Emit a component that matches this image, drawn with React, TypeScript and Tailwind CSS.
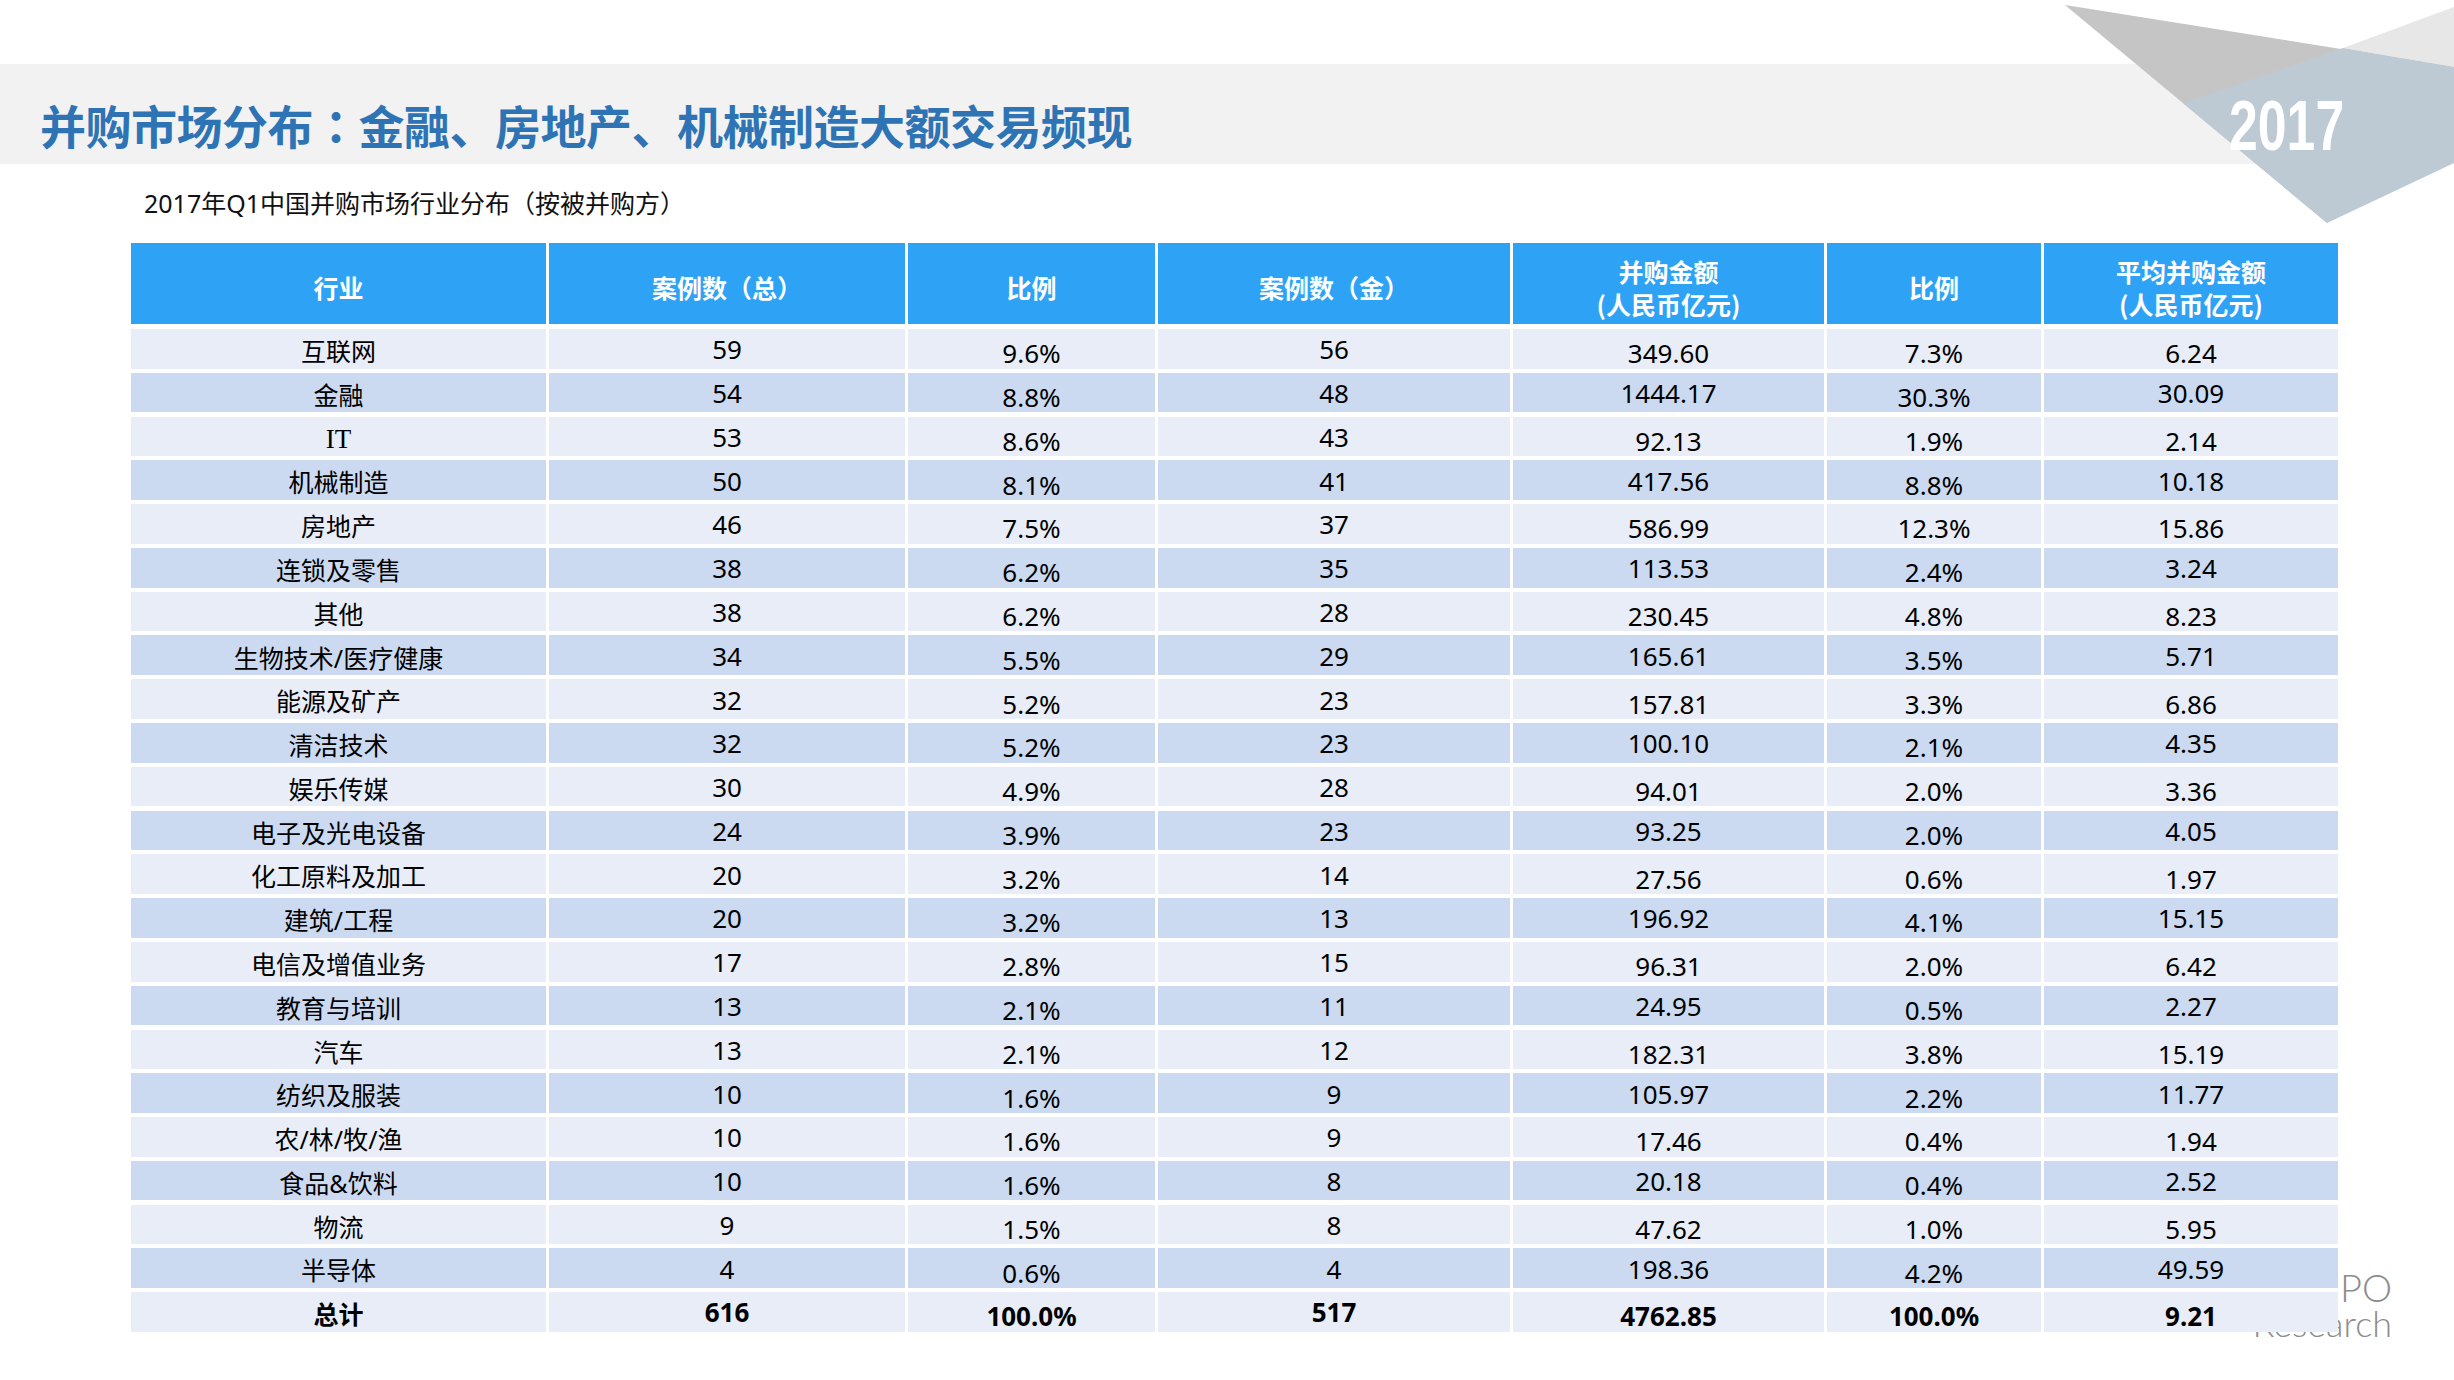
import React from "react";

const rows: string[][] = [
  ["互联网", "59", "9.6%", "56", "349.60", "7.3%", "6.24"],
  ["金融", "54", "8.8%", "48", "1444.17", "30.3%", "30.09"],
  ["IT", "53", "8.6%", "43", "92.13", "1.9%", "2.14"],
  ["机械制造", "50", "8.1%", "41", "417.56", "8.8%", "10.18"],
  ["房地产", "46", "7.5%", "37", "586.99", "12.3%", "15.86"],
  ["连锁及零售", "38", "6.2%", "35", "113.53", "2.4%", "3.24"],
  ["其他", "38", "6.2%", "28", "230.45", "4.8%", "8.23"],
  ["生物技术/医疗健康", "34", "5.5%", "29", "165.61", "3.5%", "5.71"],
  ["能源及矿产", "32", "5.2%", "23", "157.81", "3.3%", "6.86"],
  ["清洁技术", "32", "5.2%", "23", "100.10", "2.1%", "4.35"],
  ["娱乐传媒", "30", "4.9%", "28", "94.01", "2.0%", "3.36"],
  ["电子及光电设备", "24", "3.9%", "23", "93.25", "2.0%", "4.05"],
  ["化工原料及加工", "20", "3.2%", "14", "27.56", "0.6%", "1.97"],
  ["建筑/工程", "20", "3.2%", "13", "196.92", "4.1%", "15.15"],
  ["电信及增值业务", "17", "2.8%", "15", "96.31", "2.0%", "6.42"],
  ["教育与培训", "13", "2.1%", "11", "24.95", "0.5%", "2.27"],
  ["汽车", "13", "2.1%", "12", "182.31", "3.8%", "15.19"],
  ["纺织及服装", "10", "1.6%", "9", "105.97", "2.2%", "11.77"],
  ["农/林/牧/渔", "10", "1.6%", "9", "17.46", "0.4%", "1.94"],
  ["食品&饮料", "10", "1.6%", "8", "20.18", "0.4%", "2.52"],
  ["物流", "9", "1.5%", "8", "47.62", "1.0%", "5.95"],
  ["半导体", "4", "0.6%", "4", "198.36", "4.2%", "49.59"],
  ["总计", "616", "100.0%", "517", "4762.85", "100.0%", "9.21"],
];

const headers: string[][] = [
  ["行业"],
  ["案例数（总）"],
  ["比例"],
  ["案例数（金）"],
  ["并购金额", "(人民币亿元)"],
  ["比例"],
  ["平均并购金额", "(人民币亿元)"],
];

const cols = "grid-cols-[415px_356px_247px_352px_311px_214px_294px]";

function Decoration() {
  return (
    <svg
      className="absolute left-[2060px] top-0 w-[394px] h-[240px]"
      viewBox="2060 0 394 240"
    >
      <polygon points="2065,5 2454,67 2327,223" fill="#c5c5c6" />
      <polygon points="2343,48 2454,7 2454,67" fill="#e7e7e8" />
      <polygon points="2183,103 2343,48 2454,67 2454,163 2327,223" fill="#bdc9d3" />
    </svg>
  );
}

function cellShift(r: number, c: number) {
  if (c === 0) return "translate-y-[3px]";
  const low = c === 2 || c === 5 || ((c === 4 || c === 6) && r % 2 === 0);
  return low ? "translate-y-[5px]" : "translate-y-[1px]";
}

export default function App() {
  return (
    <div className="relative w-[2454px] h-[1380px] overflow-hidden bg-white font-['Noto_Sans','Noto_Sans_CJK_SC',sans-serif]">
      {/* logo, mostly hidden behind the table */}
      <div className="absolute right-[62px] top-[1269px] text-right text-[#8c8c8c] font-['Lato','Open_Sans',sans-serif] font-light">
        <div className="text-[38px] leading-[36px]">IPO</div>
        <div className="mt-[2px] text-[36px] leading-[32px]">Research</div>
      </div>

      <div className="pt-[64px]">
        <div className="h-[100px] bg-[#f2f2f2] pl-[40px] pt-[37px]">
          <h1 className="text-[46px] leading-[46px] font-bold text-[#2e74b5] font-['Noto_Sans_CJK_SC',sans-serif] tracking-[-0.5px]">
            并购市场分布<span className="font-['Noto_Sans_CJK_TC',sans-serif]">：</span>金融、房地产、机械制造大额交易频现
          </h1>
        </div>
      </div>

      <Decoration />
      <div className="absolute left-[2229px] top-[91px] text-[70px] leading-none font-bold text-white font-['Liberation_Sans',sans-serif] origin-left scale-x-[0.74]">
        2017
      </div>

      <p className="mt-[27px] pl-[144px] text-[25px] leading-[25px] text-[#111] font-['Noto_Sans','Noto_Sans_CJK_SC',sans-serif]">
        2017年Q1中国并购市场行业分布（按被并购方）
      </p>

      <div className="relative z-10 mt-[27px] ml-[131px] w-[2207px] bg-white">
        <div className={`grid ${cols} gap-x-[3px] h-[81px]`}>
          {headers.map((h, i) => (
            <div
              key={i}
              className="bg-[#2ea3f5] flex flex-col items-center justify-center pt-[8px] text-white font-bold text-[25px] leading-[33px] font-['Noto_Sans_CJK_SC',sans-serif]"
            >
              {h.map((line) => (
                <span key={line}>{line}</span>
              ))}
            </div>
          ))}
        </div>

        <div className={`grid ${cols} gap-x-[3px] gap-y-[4.2px] auto-rows-[39.6px] mt-[5px]`}>
          {rows.map((row, r) =>
            row.map((cell, c) => (
              <div
                key={`${r}-${c}`}
                className={`flex items-center justify-center text-black ${
                  c === 0 ? "text-[25px]" : "text-[26px]"
                } ${r % 2 === 0 ? "bg-[#e8edf7]" : "bg-[#cbdaf0]"} ${
                  r === rows.length - 1 ? "font-bold" : ""
                }`}
              >
                <span
                  className={`${cellShift(r, c)} ${
                    cell === "IT" ? "font-['Liberation_Serif',serif] text-[27px]" : ""
                  }`}
                >
                  {cell}
                </span>
              </div>
            ))
          )}
        </div>
      </div>
    </div>
  );
}
